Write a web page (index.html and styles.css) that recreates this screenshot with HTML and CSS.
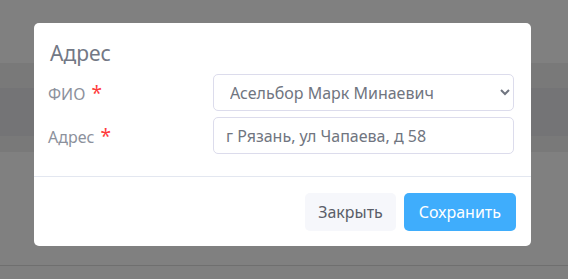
FILE: index.html
```html
<!DOCTYPE html>
<html lang="ru">
<head>
<meta charset="utf-8">
<title>Адрес</title>
<link rel="stylesheet" href="styles.css">
</head>
<body>
<div class="modal">
  <div class="modal-header">
    <h5 class="modal-title">Адрес</h5>
  </div>
  <div class="modal-body">
    <div class="form-row">
      <label class="form-label">ФИО <span class="req">*</span></label>
      <select class="form-control form-select">
        <option>Асельбор Марк Минаевич</option>
      </select>
    </div>
    <div class="form-row">
      <label class="form-label">Адрес <span class="req">*</span></label>
      <input class="form-control" type="text" value="г Рязань, ул Чапаева, д 58">
    </div>
  </div>
  <div class="modal-footer">
    <button class="btn btn-light" type="button">Закрыть</button>
    <button class="btn btn-primary" type="button">Сохранить</button>
  </div>
</div>
</body>
</html>
```

FILE: styles.css
```css
* { box-sizing: border-box; }

html, body {
  height: 100%;
}

body {
  margin: 0;
  padding: 23px 0 0 34px;
  font-family: "Noto Sans", "Open Sans", sans-serif;
  background: linear-gradient(to bottom,
    #808080 0, #808080 63px,
    #797979 63px, #797979 88px,
    #747476 88px, #747476 136px,
    #797979 136px, #797979 152px,
    #808080 152px, #808080 265px,
    #6f6f6f 265px, #6f6f6f 266px,
    #7f7f7f 266px);
}

.modal {
  width: 497px;
  height: 223px;
  background: #fff;
  border-radius: 5px;
  display: flex;
  flex-direction: column;
}

.modal-header {
  padding: 15px 15px 0 16px;
}

.modal-title {
  margin: 0;
  font-size: 21px;
  font-weight: 400;
  line-height: 30px;
  color: #737885;
}

.modal-body {
  padding: 6px 17px 22px 14px;
  display: flex;
  flex-direction: column;
  gap: 6px;
}

.form-row {
  display: grid;
  grid-template-columns: 165px 1fr;
  align-items: center;
}

.form-label {
  font-size: 16px;
  color: #8c919c;
}

.req {
  color: #ff3b3b;
  font-size: 19px;
  margin-left: 2px;
}

.form-control {
  height: 37px;
  width: 100%;
  border: 1px solid #dcdcec;
  border-radius: 5px;
  background-color: #fff;
  font-family: inherit;
  font-size: 16px;
  color: #707580;
  padding: 0 12px;
  outline: none;
}

.form-select {
  padding-left: 12px;
}

.modal-footer {
  border-top: 1px solid #e3e7f0;
  margin-top: auto;
  padding: 16px 15px 15px;
  display: flex;
  justify-content: flex-end;
  gap: 8px;
}

.btn {
  height: 38px;
  border: 0;
  border-radius: 5px;
  font-family: inherit;
  font-size: 16px;
  padding: 0 13px;
  cursor: pointer;
}

.btn-light {
  background: #f6f7fb;
  color: #5a5e68;
}

.btn-primary {
  background: #3fadfc;
  color: #fff;
  padding: 0 15px;
}
```
